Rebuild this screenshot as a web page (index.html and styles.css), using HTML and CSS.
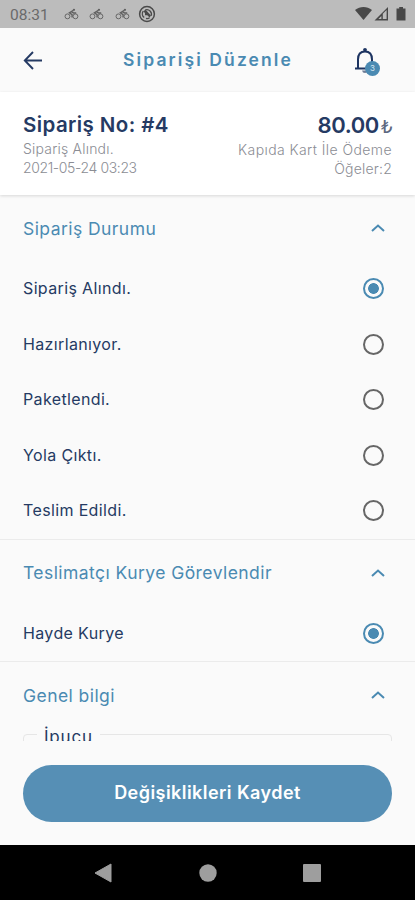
FILE: index.html
```html
<!DOCTYPE html>
<html lang="tr">

<head>
  <meta charset="UTF-8">
  <meta name="viewport" content="width=device-width, initial-scale=1.0">
  <title>Siparişi Düzenle</title>
  <link rel="stylesheet" href="styles.css">
</head>

<body>
  <svg class="defs" width="0" height="0">
    <symbol id="bike" viewBox="0 0 16 12">
      <g fill="none" stroke="#606060" stroke-width="1">
        <circle cx="3.7" cy="8.5" r="2.6" />
        <circle cx="12.2" cy="8.5" r="2.6" />
        <path d="M10 2.2L5.8 4.8 8.6 6.7V9.8M8 3.6L10.2 5H13" stroke-width="1.5" />
      </g>
      <circle cx="10.6" cy="1.5" r="1.2" fill="#606060" />
    </symbol>
    <symbol id="chevron" viewBox="0 0 14 8">
      <path d="M1 7L7 1.5 13 7" fill="none" stroke="#4a8ab2" stroke-width="2" />
    </symbol>
  </svg>

  <div class="screen">
    <div class="status-bar">
      <span class="time">08:31</span>
      <svg class="bike"><use href="#bike" /></svg>
      <svg class="bike"><use href="#bike" /></svg>
      <svg class="bike"><use href="#bike" /></svg>
      <svg class="sync" width="18" height="18" viewBox="0 0 18 18">
        <circle cx="9" cy="9" r="7.4" fill="none" stroke="#4a4a4a" stroke-width="1.5" />
        <path d="M6.2 12.5A4.6 4.6 0 0 1 5.2 6.2M7.3 4.9A4.6 4.6 0 0 1 13.2 10.7M11.6 12.8A4.6 4.6 0 0 1 8 13.4" fill="none" stroke="#4a4a4a" stroke-width="1.3" />
        <path d="M5.2 6.2L7.6 4.8L13 10.6L11.6 12.4L9.3 10.2H7V8Z" fill="#4a4a4a" />
      </svg>
      <svg class="system" width="52" height="16" viewBox="0 0 52 16">
        <path d="M0 4C5 0 12 0 17 4L8.5 14Z" fill="#484848" />
        <path d="M19.5 14.5L33 1V14.5Z" fill="#484848" />
        <path d="M27.8 13V7.8L31.6 4V13Z" fill="#bcbcbc" />
        <path d="M23.4 13L26.4 10V13Z" fill="#bcbcbc" />
        <path d="M41.5 2.5H44.2V1H48V2.5H50.5V14.5H41.5Z" fill="#484848" />
      </svg>
    </div>

    <div class="app-bar">
      <svg class="back" width="20" height="20" viewBox="0 0 20 20">
        <path d="M19 10.5H2M10 2L1.8 10.5 10 19" fill="none" stroke="#253a63" stroke-width="1.9" />
      </svg>
      <h1>Siparişi Düzenle</h1>
      <div class="bell">
        <svg width="22" height="28" viewBox="0 0 22 28">
          <path d="M1 21.5H21M4 21V12.5C4 7 7 4.5 11 4.5S18 7 18 12.5V21" fill="none" stroke="#1d3461" stroke-width="2" />
          <circle cx="11" cy="2.8" r="1.9" fill="#1d3461" />
          <path d="M8 23.5H14Q13.5 26 11 26T8 23.5Z" fill="#6f7d96" />
        </svg>
        <span class="badge">3</span>
      </div>
    </div>

    <div class="summary">
      <div class="summary-left">
        <h2>Sipariş No: #4</h2>
        <p>Sipariş Alındı.</p>
        <p class="date">2021-05-24 03:23</p>
      </div>
      <div class="summary-right">
        <div class="price">80.00<span>₺</span></div>
        <p class="payment">Kapıda Kart İle Ödeme</p>
        <p>Öğeler:2</p>
      </div>
    </div>

    <div class="content">
      <div class="section">
        <div class="section-head">
          <h3>Sipariş Durumu</h3>
          <svg class="chevron"><use href="#chevron" /></svg>
        </div>
        <label class="option"><span>Sipariş Alındı.</span><input type="radio" name="status" checked></label>
        <label class="option"><span>Hazırlanıyor.</span><input type="radio" name="status"></label>
        <label class="option"><span>Paketlendi.</span><input type="radio" name="status"></label>
        <label class="option"><span>Yola Çıktı.</span><input type="radio" name="status"></label>
        <label class="option"><span>Teslim Edildi.</span><input type="radio" name="status"></label>
      </div>

      <div class="section">
        <div class="section-head">
          <h3>Teslimatçı Kurye Görevlendir</h3>
          <svg class="chevron"><use href="#chevron" /></svg>
        </div>
        <label class="option"><span>Hayde Kurye</span><input type="radio" name="courier" checked></label>
      </div>

      <div class="section">
        <div class="section-head">
          <h3>Genel bilgi</h3>
          <svg class="chevron"><use href="#chevron" /></svg>
        </div>
        <fieldset class="hint">
          <legend>İpucu</legend>
        </fieldset>
      </div>
    </div>

    <div class="footer">
      <button>Değişiklikleri Kaydet</button>
    </div>

    <div class="nav-bar">
      <svg width="18" height="20" viewBox="0 0 18 20"><path d="M1 10L17 1V19Z" fill="#9e9e9e" stroke="#9e9e9e" stroke-linejoin="round" /></svg>
      <svg width="18" height="18" viewBox="0 0 18 18"><circle cx="9" cy="9" r="8.7" fill="#9e9e9e" /></svg>
      <svg width="18" height="18" viewBox="0 0 18 18"><rect width="18" height="18" rx="1" fill="#9e9e9e" /></svg>
    </div>
  </div>
</body>

</html>
```
FILE: styles.css
```css
* {
  box-sizing: border-box;
}

body {
  margin: 0;
  font-family: Inter, "Open Sans", sans-serif;
  color: #253a63;
  background-color: #fafafa;
}

h1,
h2,
h3,
p {
  margin: 0;
}

.defs {
  display: block;
}

.screen {
  display: flex;
  flex-direction: column;
  width: 415px;
  height: 900px;
  overflow: hidden;
}

.status-bar {
  display: flex;
  align-items: center;
  height: 28px;
  flex-shrink: 0;
  padding: 0 8px 0 10px;
  background-color: #bcbcbc;
}

.time {
  width: 54px;
  font-family: Roboto, sans-serif;
  font-size: 15.5px;
  color: #6a6a6a;
  padding-top: 2px;
}

.bike {
  width: 15px;
  height: 12px;
  margin-right: 10.3px;
}

.sync {
  margin-left: -2px;
}

.system {
  margin-left: auto;
}

.app-bar {
  display: flex;
  align-items: center;
  justify-content: space-between;
  height: 64px;
  flex-shrink: 0;
  padding: 0 35px 0 23px;
}

h1 {
  font-size: 17.5px;
  font-weight: 600;
  letter-spacing: 2.1px;
  line-height: 22px;
  color: #4a8ab2;
  margin-left: 19px;
}

.bell {
  position: relative;
  width: 26px;
  height: 27px;
}

.badge {
  position: absolute;
  right: 0;
  bottom: -2px;
  width: 15px;
  height: 15px;
  border-radius: 50%;
  background-color: #4a8ab2;
  color: #d4e5f0;
  font-size: 8px;
  line-height: 14px;
  text-align: center;
}

.summary {
  display: flex;
  justify-content: space-between;
  height: 103px;
  flex-shrink: 0;
  padding: 19px 23px 0;
  background-color: #fff;
  box-shadow: 0 1px 3px rgba(0, 0, 0, 0.14);
  z-index: 1;
}

h2 {
  font-size: 20.5px;
  line-height: 28px;
  font-weight: 600;
  letter-spacing: 0.4px;
}

.summary p {
  font-size: 14px;
  line-height: 19px;
  font-weight: 300;
  letter-spacing: 0.2px;
  color: #8b8d94;
}

.summary .date {
  letter-spacing: -0.38px;
}

.summary .payment {
  letter-spacing: 0.42px;
}

.summary-right {
  text-align: right;
}

.price {
  font-size: 22px;
  line-height: 29px;
  font-weight: 600;
  letter-spacing: -0.4px;
}

.price span {
  margin-left: 2px;
  font-family: "DejaVu Sans", sans-serif;
  font-size: 18px;
  font-weight: 400;
  line-height: 1;
  color: #5d6880;
}

.content {
  height: 546px;
  flex-shrink: 0;
  overflow: hidden;
}

.section {
  border-bottom: 1px solid #ebebeb;
}

.section-head {
  display: flex;
  align-items: center;
  justify-content: space-between;
  height: 66px;
  padding: 0 30px 0 23px;
}

h3 {
  font-size: 17.5px;
  font-weight: 400;
  letter-spacing: 0.44px;
  color: #4a8ab2;
}

.chevron {
  width: 14px;
  height: 8px;
}

.option {
  display: flex;
  align-items: center;
  justify-content: space-between;
  height: 55.5px;
  padding: 0 31px 0 23px;
  font-size: 16px;
  letter-spacing: 0.36px;
}

.option span {
  padding-bottom: 1px;
}

.option input {
  appearance: none;
  width: 21px;
  height: 21px;
  margin: 0;
  border: 2px solid #666;
  border-radius: 50%;
}

.option input:checked {
  border-color: #4a8ab2;
  background: radial-gradient(circle, #4a8ab2 5px, transparent 5.7px);
}

.hint {
  height: 60px;
  margin: 0 23px;
  padding: 0 13px;
  border: 1px solid #e6e6e6;
  border-radius: 4px;
}

.hint legend {
  height: 12px;
  padding: 0 7px;
  font-size: 17px;
  line-height: 19px;
  letter-spacing: 0.8px;
}

.footer {
  height: 104px;
  flex-shrink: 0;
  padding: 24px 23px 0;
}

button {
  width: 100%;
  height: 57px;
  border: none;
  border-radius: 29px;
  background-color: #568fb5;
  color: white;
  font-family: inherit;
  font-size: 18px;
  font-weight: 600;
  letter-spacing: 0.45px;
  padding-bottom: 3px;
}

.nav-bar {
  display: flex;
  align-items: center;
  justify-content: space-between;
  flex: 1;
  padding: 0 94px;
  background-color: #000;
}
```
